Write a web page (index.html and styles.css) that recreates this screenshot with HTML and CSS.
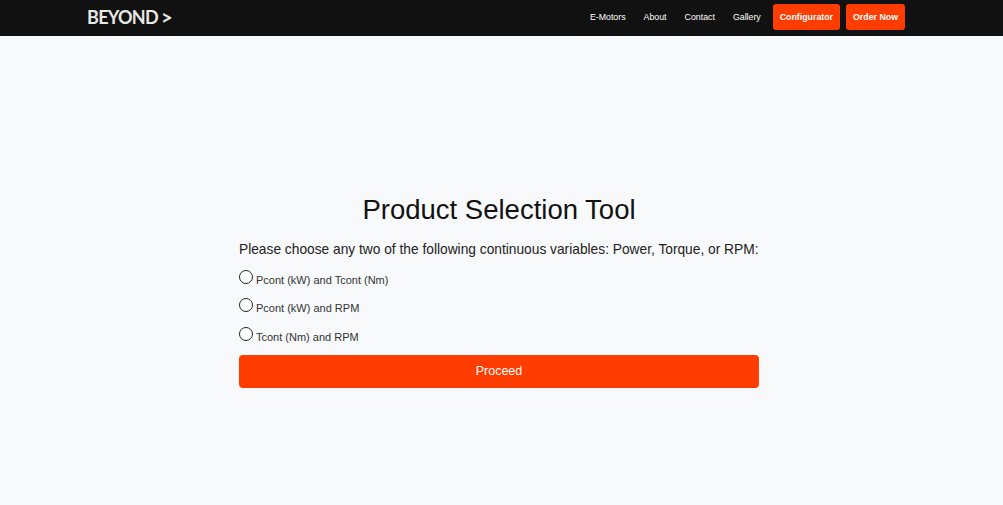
FILE: index.html
```html
<!DOCTYPE html>
<html lang="en">
<head>
    <meta name="viewport" content="width=device-width, initial-scale=1">
    <title>Product Selection Tool</title>
    <link rel="stylesheet" href="styles.css">
</head>
<body>

<nav class="navbar">
    <a class="brand" href="#">BEYOND<span class="brand-arrow">&gt;</span></a>
    <div class="nav-links">
        <a href="#">E-Motors</a>
        <a href="#">About</a>
        <a href="#">Contact</a>
        <a href="#">Gallery</a>
        <a href="#" class="nav-button">Configurator</a>
        <a href="#" class="nav-button">Order Now</a>
    </div>
</nav>

<main class="page">
    <form class="selector">
        <h1>Product Selection Tool</h1>
        <p class="intro">Please choose any two of the following continuous variables: Power, Torque, or RPM:</p>

        <label class="option">
            <input type="radio" name="variables">
            <span>Pcont (kW) and Tcont (Nm)</span>
        </label>
        <label class="option">
            <input type="radio" name="variables">
            <span>Pcont (kW) and RPM</span>
        </label>
        <label class="option">
            <input type="radio" name="variables">
            <span>Tcont (Nm) and RPM</span>
        </label>

        <button type="button" class="proceed">Proceed</button>
    </form>
</main>

</body>
</html>
```

FILE: styles.css
```css
* {
    box-sizing: border-box;
}

body {
    margin: 0;
    min-height: 505px;
    display: flex;
    flex-direction: column;
    font-family: "Liberation Sans", Arial, sans-serif;
    background-color: #f8f9fa;
    color: #222;
}

.navbar {
    height: 36px;
    padding: 0 98px 2px 87px;
    display: flex;
    align-items: center;
    justify-content: space-between;
    background-color: #111;
}

.brand {
    display: flex;
    align-items: center;
    font-family: Lato, "Liberation Sans", sans-serif;
    font-size: 18px;
    font-weight: bold;
    letter-spacing: -0.7px;
    color: #e8e8e4;
    text-decoration: none;
}

.brand-arrow {
    margin-left: 3px;
    font-size: 20px;
    line-height: 17px;
}

.nav-links {
    display: flex;
    align-items: center;
}

.nav-links a {
    margin-left: 18px;
    font-size: 8.8px;
    color: #fff;
    text-decoration: none;
}

.nav-links .nav-button {
    height: 26px;
    margin-left: 6px;
    padding: 0 7px;
    display: flex;
    align-items: center;
    font-weight: bold;
    background-color: #ff3d00;
    border-radius: 3px;
}

.nav-links a:nth-child(5) {
    margin-left: 12px;
}

.page {
    flex: 1;
    padding: 156px 5px 0 0;
    display: flex;
    justify-content: center;
}

.selector {
    width: 520px;
    display: flex;
    flex-direction: column;
}

h1 {
    margin: 0 0 12px;
    font-size: 27.5px;
    font-weight: normal;
    line-height: 36px;
    text-align: center;
    color: #111;
}

.intro {
    margin: 0 0 10px;
    font-size: 13.75px;
    line-height: 20px;
    white-space: nowrap;
}

.option {
    height: 28.33px;
    display: flex;
    align-items: flex-start;
    font-size: 11px;
    color: #333;
}

.option span {
    margin: 2px 0 0 3px;
    line-height: 16px;
}

.option input {
    appearance: none;
    width: 14px;
    height: 14px;
    margin: 0;
    background-color: #fff;
    border: 1px solid #222;
    border-radius: 50%;
}

.proceed {
    height: 33px;
    font-family: inherit;
    font-size: 12.5px;
    color: #fff;
    background-color: #ff3d00;
    border: none;
    border-radius: 4px;
    cursor: pointer;
}
```
